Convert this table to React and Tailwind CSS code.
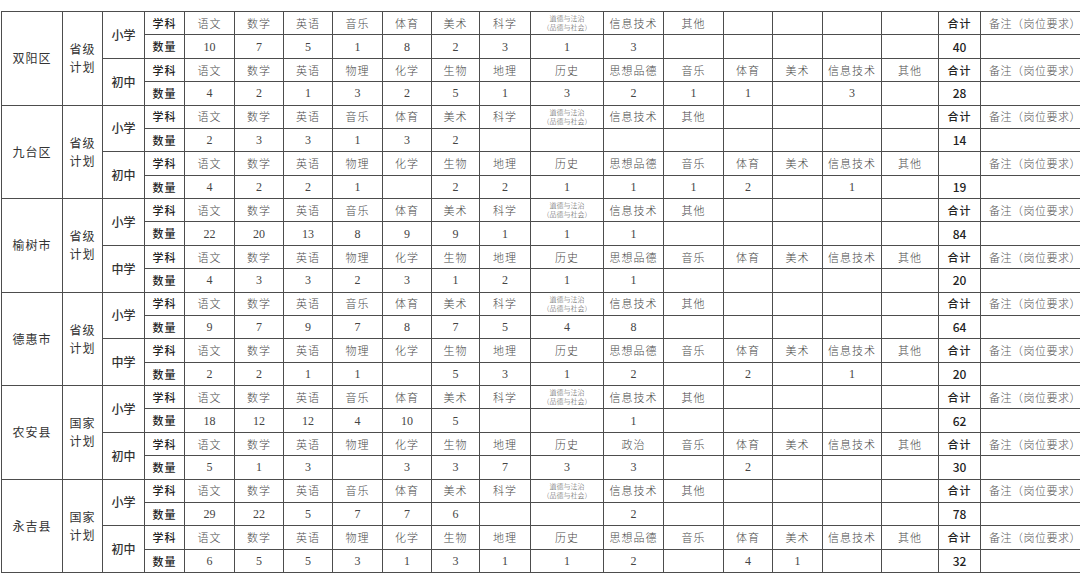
import React from "react";

const PRIMARY = ["语文", "数学", "英语", "音乐", "体育", "美术", "科学", "DAODE", "信息技术", "其他", "", "", "", ""];
const MIDDLE = ["语文", "数学", "英语", "物理", "化学", "生物", "地理", "历史", "思想品德", "音乐", "体育", "美术", "信息技术", "其他"];
const MIDDLE_NA = ["语文", "数学", "英语", "物理", "化学", "生物", "地理", "历史", "政治", "音乐", "体育", "美术", "信息技术", "其他"];

const groups = [
  {
    name: "双阳区", plan: ["省级", "计划"],
    levels: [
      { label: "小学", subjects: PRIMARY, nums: ["10", "7", "5", "1", "8", "2", "3", "1", "3", "", "", "", "", ""], total: "40" },
      { label: "初中", subjects: MIDDLE, nums: ["4", "2", "1", "3", "2", "5", "1", "3", "2", "1", "1", "", "3", ""], total: "28" },
    ],
  },
  {
    name: "九台区", plan: ["省级", "计划"],
    levels: [
      { label: "小学", subjects: PRIMARY, nums: ["2", "3", "3", "1", "3", "2", "", "", "", "", "", "", "", ""], total: "14" },
      { label: "初中", subjects: MIDDLE, nums: ["4", "2", "2", "1", "", "2", "2", "1", "1", "1", "2", "", "1", ""], total: "19", noTotalLabel: true },
    ],
  },
  {
    name: "榆树市", plan: ["省级", "计划"],
    levels: [
      { label: "小学", subjects: PRIMARY, nums: ["22", "20", "13", "8", "9", "9", "1", "1", "1", "", "", "", "", ""], total: "84" },
      { label: "中学", subjects: MIDDLE, nums: ["4", "3", "3", "2", "3", "1", "2", "1", "1", "", "", "", "", ""], total: "20" },
    ],
  },
  {
    name: "德惠市", plan: ["省级", "计划"],
    levels: [
      { label: "小学", subjects: PRIMARY, nums: ["9", "7", "9", "7", "8", "7", "5", "4", "8", "", "", "", "", ""], total: "64" },
      { label: "中学", subjects: MIDDLE, nums: ["2", "2", "1", "1", "", "5", "3", "1", "2", "", "2", "", "1", ""], total: "20" },
    ],
  },
  {
    name: "农安县", plan: ["国家", "计划"],
    levels: [
      { label: "小学", subjects: PRIMARY, nums: ["18", "12", "12", "4", "10", "5", "", "", "1", "", "", "", "", ""], total: "62" },
      { label: "初中", subjects: MIDDLE_NA, nums: ["5", "1", "3", "", "3", "3", "7", "3", "3", "", "2", "", "", ""], total: "30" },
    ],
  },
  {
    name: "永吉县", plan: ["国家", "计划"],
    levels: [
      { label: "小学", subjects: PRIMARY, nums: ["29", "22", "5", "7", "7", "6", "", "", "2", "", "", "", "", ""], total: "78" },
      { label: "初中", subjects: MIDDLE, nums: ["6", "5", "5", "3", "1", "3", "1", "1", "2", "", "4", "1", "", ""], total: "32" },
    ],
  },
];

function Cell({ children, className = "" }) {
  return (
    <div className={"bg-white flex items-center justify-center text-center font-['Noto_Sans_CJK_SC','Noto_Sans',sans-serif] " + className}>
      {children}
    </div>
  );
}

function Subject({ s }) {
  if (s === "DAODE") {
    return (
      <Cell className="flex-col text-[7px] leading-[9px] text-[#555] font-light">
        <span>道德与法治</span>
        <span>（品德与社会）</span>
      </Cell>
    );
  }
  return <Cell className="text-[11px] text-[#4a4a4a] font-light tracking-[1px]">{s}</Cell>;
}

function NumCell({ n }) {
  return (
    <div className="bg-white flex items-center justify-center text-[12px] text-[#444] font-['Liberation_Serif','Noto_Sans_CJK_SC',serif]">
      {n}
    </div>
  );
}

export default function App() {
  const cells = [];
  groups.forEach((g, gi) => {
    g.levels.forEach((lv, li) => {
      if (li === 0) {
        cells.push(
          <Cell key={`n${gi}`} className="row-span-4 text-[12px] text-[#333] tracking-[1px]">
            {g.name}
          </Cell>
        );
        cells.push(
          <Cell key={`p${gi}`} className="row-span-4 flex-col text-[12px] leading-[18px] text-[#333] tracking-[1px]">
            <span>{g.plan[0]}</span>
            <span>{g.plan[1]}</span>
          </Cell>
        );
      }
      cells.push(
        <Cell key={`l${gi}${li}`} className="row-span-2 text-[12px] text-[#333] font-medium">
          {lv.label}
        </Cell>
      );
      cells.push(
        <Cell key={`sl${gi}${li}`} className="text-[11px] text-[#222] font-medium tracking-[1px]">
          学科
        </Cell>
      );
      lv.subjects.forEach((s, si) => cells.push(<Subject key={`s${gi}${li}${si}`} s={s} />));
      cells.push(
        <Cell key={`tl${gi}${li}`} className="text-[11px] text-[#222] font-medium tracking-[1px]">
          {lv.noTotalLabel ? "" : "合计"}
        </Cell>
      );
      cells.push(
        <Cell key={`r${gi}${li}`} className="text-[11px] text-[#555] font-light justify-start pl-[8px] tracking-[0.5px]">
          备注（岗位要求）
        </Cell>
      );
      cells.push(
        <Cell key={`ql${gi}${li}`} className="text-[11px] text-[#222] font-medium tracking-[1px]">
          数量
        </Cell>
      );
      lv.nums.forEach((n, ni) => cells.push(<NumCell key={`q${gi}${li}${ni}`} n={n} />));
      cells.push(
        <Cell key={`t${gi}${li}`} className="text-[12px] text-[#222] font-medium">
          {lv.total}
        </Cell>
      );
      cells.push(<Cell key={`e${gi}${li}`} />);
    });
  });

  return (
    <div className="w-[1080px] h-[575px] overflow-hidden bg-white">
      <div className="ml-px mt-[11px] w-max h-[562px] p-px gap-px bg-[#4d4d4d] grid grid-cols-[60px_39px_41px_39px_49px_48px_48px_49px_48px_47px_50px_72px_59px_59px_48px_49px_58px_56px_41px_110px] grid-rows-[repeat(24,1fr)]">
        {cells}
      </div>
    </div>
  );
}
